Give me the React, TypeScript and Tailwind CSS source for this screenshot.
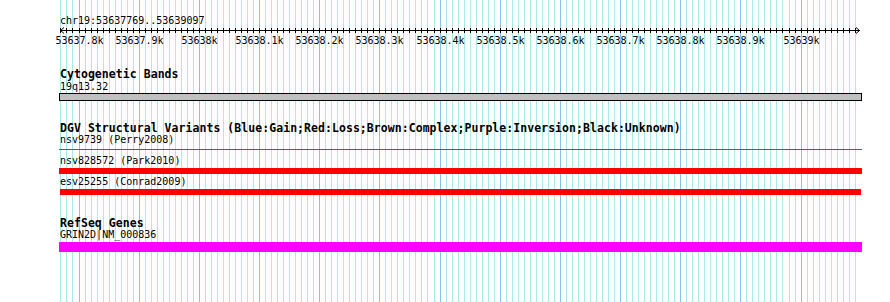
const START = 53637769;
const SCALE = 0.6017;
const X0 = 60.35;

const bpToX = (bp: number) => Math.floor(X0 + (bp - START) * SCALE) + 0.5;

const grid = Array.from({ length: 133 }, (_, k) => 53637770 + k * 10);
const majors = grid.filter((bp) => bp % 100 === 0);

const label = (bp: number) =>
  `${(bp / 1000).toFixed(1).replace(/\.0$/, "")}k`;

const mono = { fontFamily: '"DejaVu Sans Mono", "Liberation Mono", monospace' };

function GridLines() {
  return (
    <svg
      className="pointer-events-none absolute left-0 top-0"
      width={890}
      height={302}
      shapeRendering="crispEdges"
    >
      {grid.map((bp) => (
        <line
          key={bp}
          x1={bpToX(bp)}
          x2={bpToX(bp)}
          y1={0}
          y2={302}
          stroke={bp % 100 === 0 ? "#88c2ec" : "#ace8e8"}
          strokeWidth={1}
        />
      ))}
    </svg>
  );
}

function Ruler() {
  return (
    <svg width={890} height={20} className="block">
      <g shapeRendering="crispEdges">
        <line x1={60} x2={860} y1={3.5} y2={3.5} stroke="#000" />
        {grid.map((bp) => (
          <line
            key={bp}
            x1={bpToX(bp)}
            x2={bpToX(bp)}
            y1={1}
            y2={6}
            stroke="#000"
          />
        ))}
      </g>
      <polyline points="64,0.5 60.5,3.5 64,6.5" fill="none" stroke="#000" />
      <polyline points="856,0.5 859.5,3.5 856,6.5" fill="none" stroke="#000" />
      {majors.map((bp) => (
        <text
          key={bp}
          x={bpToX(bp)}
          y={17}
          textAnchor="middle"
          fontSize={10}
          fill="#000"
          style={mono}
        >
          {label(bp)}
        </text>
      ))}
    </svg>
  );
}

function Title({ children, className = "" }: { children: string; className?: string }) {
  return (
    <div
      className={`ml-[60px] h-[12px] whitespace-nowrap text-[11.5px] font-bold leading-[12px] tracking-[0.05px] text-black ${className}`}
      style={mono}
    >
      {children}
    </div>
  );
}

function Label({ children, className = "" }: { children: string; className?: string }) {
  return (
    <div
      className={`ml-[60px] h-[12px] whitespace-nowrap text-[10px] leading-[12px] text-black ${className}`}
      style={mono}
    >
      {children}
    </div>
  );
}

export default function App() {
  return (
    <main className="relative h-[302px] w-[890px] overflow-hidden bg-white">
      <GridLines />
      <div className="relative flex flex-col">
        <Label className="mt-[15px]">chr19:53637769..53639097</Label>
        <Ruler />

        <Title className="mt-[21px]">Cytogenetic Bands</Title>
        <Label className="mt-[1px]">19q13.32</Label>
        <div className="ml-[59px] h-[8px] w-[803px] border border-black bg-[#c0c0c0]" />

        <Title className="mt-[21px]">
          DGV Structural Variants (Blue:Gain;Red:Loss;Brown:Complex;Purple:Inversion;Black:Unknown)
        </Title>
        <Label>nsv9739 (Perry2008)</Label>
        <div className="ml-[59px] mt-[3px] h-px w-[803px] bg-[#a0461e]" />
        <Label className="mt-[5px]">nsv828572 (Park2010)</Label>
        <div className="ml-[59px] mt-px h-[6px] w-[803px] bg-[#ff0000]" />
        <Label className="mt-[2px]">esv25255 (Conrad2009)</Label>
        <div className="ml-[60px] mt-px h-[6px] w-[801px] bg-[#ff0000]" />

        <Title className="mt-[22px]">RefSeq Genes</Title>
        <Label>GRIN2D|NM_000836</Label>
        <div className="ml-[59px] mt-px h-[10px] w-[803px] bg-[#ff00ff]" />
      </div>
    </main>
  );
}
